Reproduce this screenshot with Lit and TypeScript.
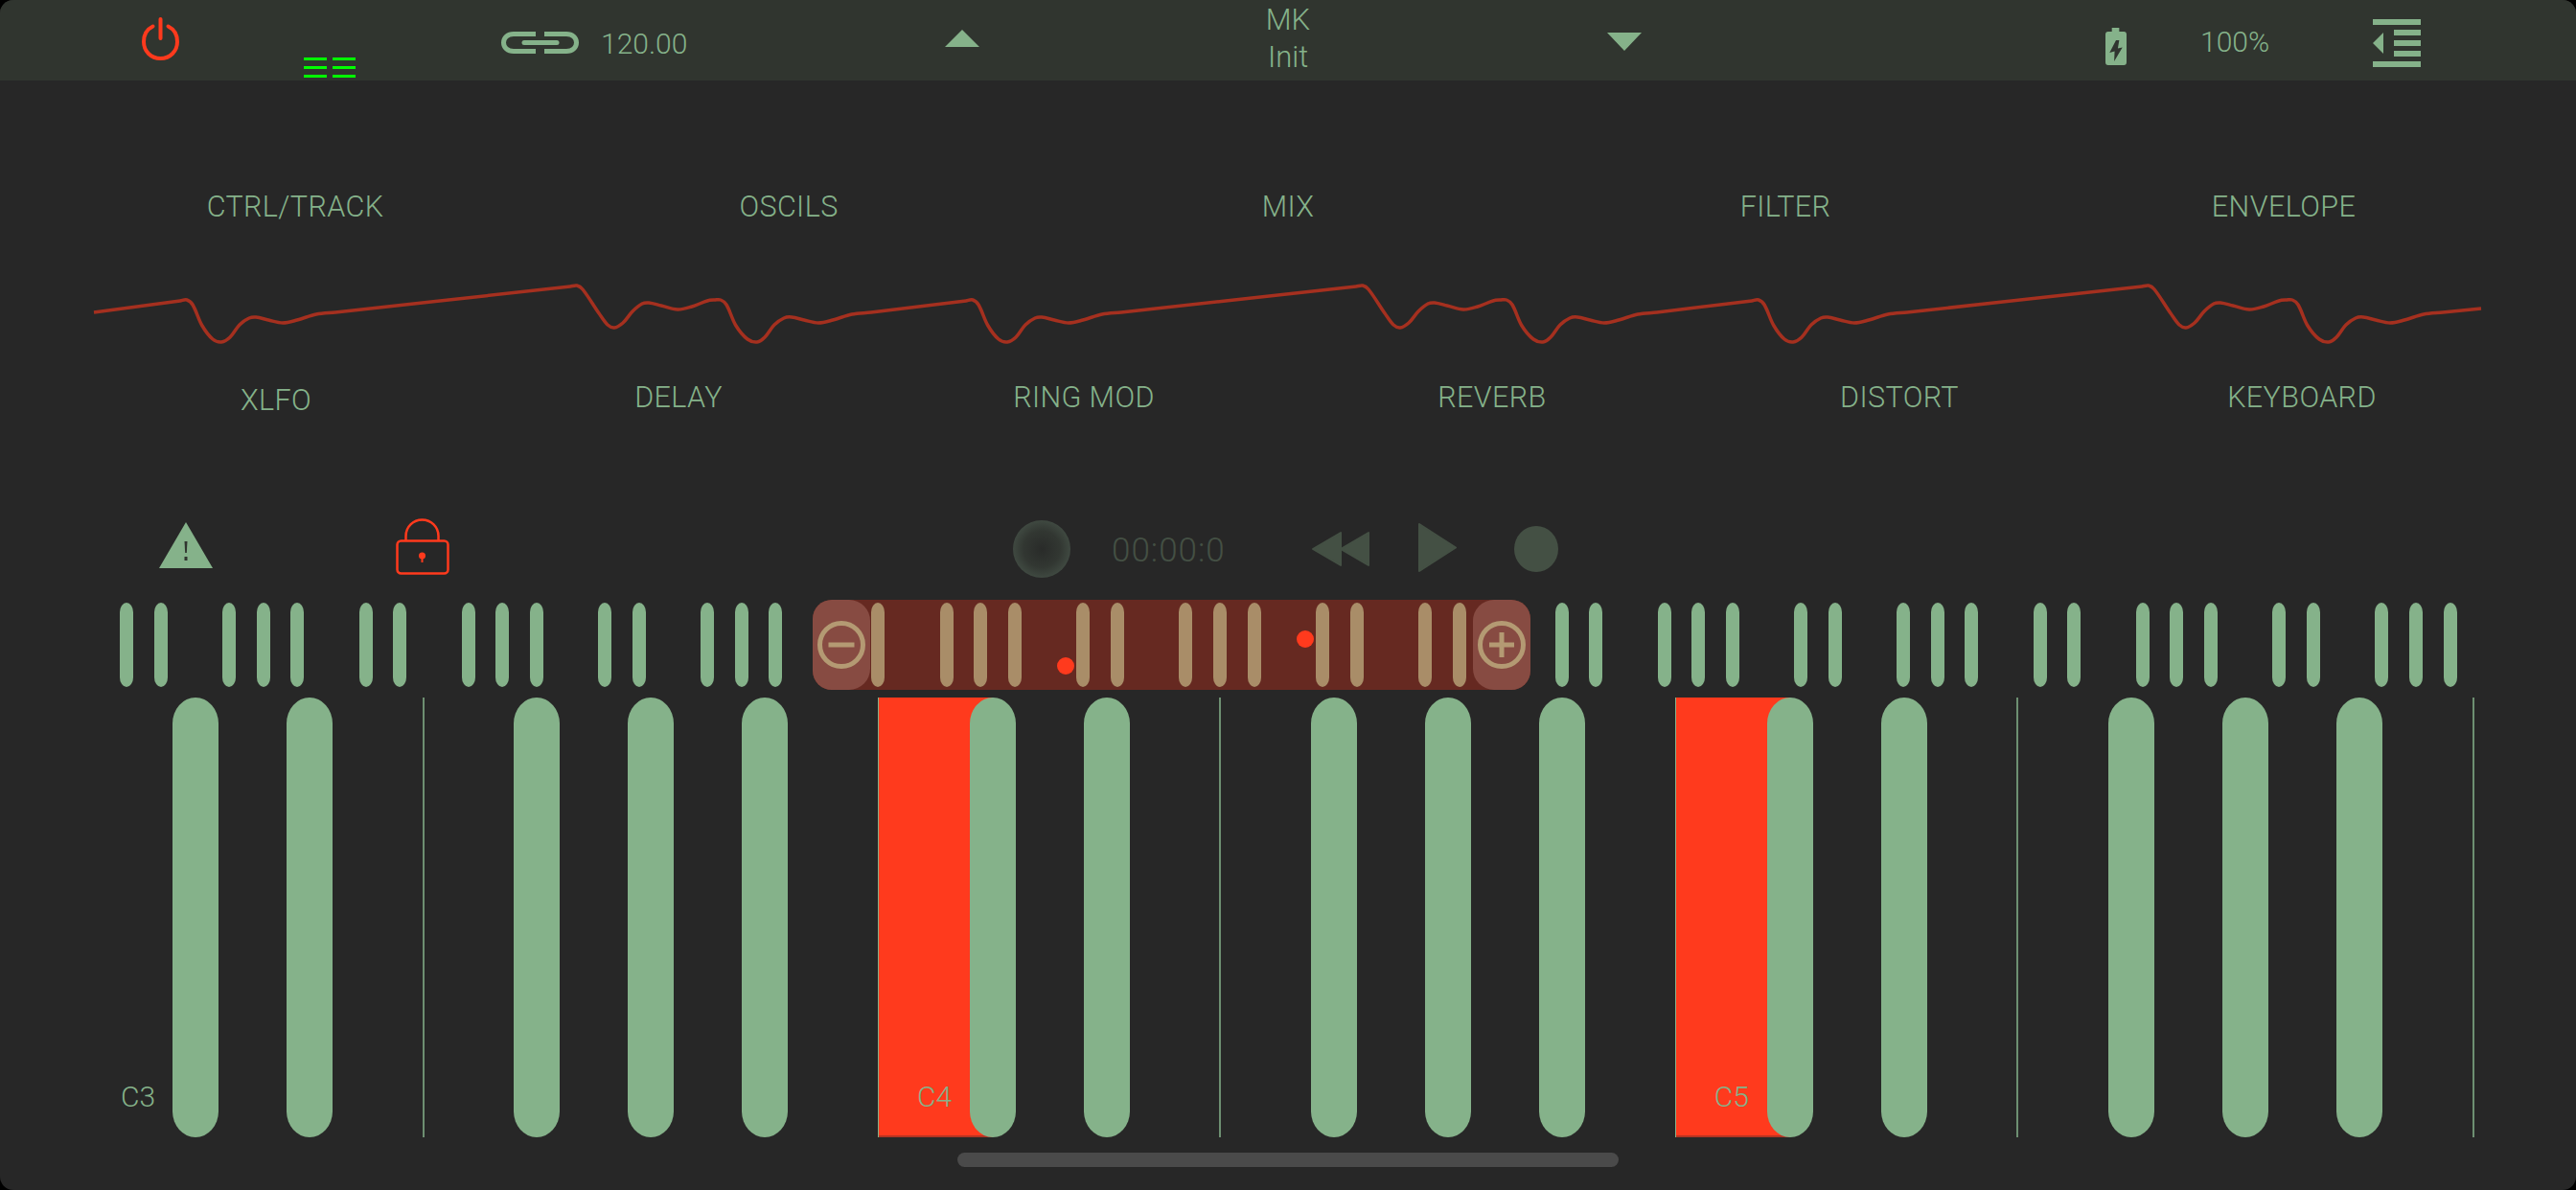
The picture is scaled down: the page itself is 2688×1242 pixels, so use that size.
import { LitElement, html, css, svg } from "lit";
import { customElement } from "lit/decorators.js";

const wavePath = (): string => {
  const cycle: [number, number][] = [
    [188, 314], [195, 313], [201, 318], [211, 340], [222, 354], [231, 357], [240, 352], [250, 339], [260, 332], [267, 331], [280, 334], [295, 337], [310, 334], [330, 328], [350, 326],
    [595, 299], [602, 298], [608, 302], [625, 327], [634, 339], [641, 342], [650, 337], [660, 325], [670, 317], [677, 316], [690, 319], [707, 323], [722, 320], [738, 314], [746, 313], [752, 313], [758, 318], [768, 340], [780, 354], [790, 357],
    [798, 352], [808, 339], [818, 332], [826, 331], [839, 334], [854, 337], [869, 334], [889, 328], [909, 326],
  ];
  const pts: [number, number][] = [[98, 326]];
  for (let k = 0; k < 3; k++) for (const [x, y] of cycle) pts.push([x + 820 * k, y]);
  pts.push([2589, 322]);
  const P = pts.filter(p => p[0] <= 2589);
  const tangent = (i: number): [number, number] => {
    const a = P[Math.max(0, i - 1)], b = P[Math.min(P.length - 1, i + 1)];
    const dx = b[0] - a[0], dy = b[1] - a[1];
    const len = Math.hypot(dx, dy) || 1;
    return [dx / len, dy / len];
  };
  let d = `M${P[0][0]} ${P[0][1]}`;
  for (let i = 0; i < P.length - 1; i++) {
    const p1 = P[i], p2 = P[i + 1];
    const seg = Math.hypot(p2[0] - p1[0], p2[1] - p1[1]) / 3;
    const t1 = tangent(i), t2 = tangent(i + 1);
    const c1x = p1[0] + t1[0] * seg, c1y = p1[1] + t1[1] * seg;
    const c2x = p2[0] - t2[0] * seg, c2y = p2[1] - t2[1] * seg;
    d += `C${c1x.toFixed(1)} ${c1y.toFixed(1)} ${c2x.toFixed(1)} ${c2y.toFixed(1)} ${p2[0]} ${p2[1]}`;
  }
  return d;
};

const BLACK_STEPS = [0, 1, 3, 4, 5];
const miniIndices: number[] = [];
for (let o = 0; o < 10; o++) for (const s of BLACK_STEPS) miniIndices.push(o * 7 + s);

const topLabels = ["CTRL/TRACK", "OSCILS", "MIX", "FILTER", "ENVELOPE"];
const bottomLabels = ["XLFO", "DELAY", "RING MOD", "REVERB", "DISTORT", "KEYBOARD"];

@customElement("app-root")
export class AppRoot extends LitElement {
  static styles = css`
    :host { display: block; width: 2688px; height: 1242px; background: #000; overflow: hidden; }
    .screen {
      width: 2688px; height: 1242px; background: #272727; border-radius: 14px; overflow: hidden;
      display: flex; flex-direction: column; color: #85b28a;
      font-family: Roboto, "Liberation Sans", sans-serif; font-weight: 300; font-size: 30px;
    }
    svg { display: block; flex: none; }

    .header { height: 84px; background: #30352f; flex: none; position: relative; display: grid;
      grid-template-columns: 148px 39px 130px 54px 152px 81px 23px 93px 266px 36px 300px 44px 311px 36px 484px 22px 77px 72px 108px 50px 1fr;
      align-items: start; }
    .power { margin-top: 18px; }
    .levels { margin-top: 60px; display: grid; grid-template-columns: 24px 24px; column-gap: 6px; row-gap: 6px; }
    .levels i { display: block; height: 3px; background: #00ff00; }
    .link { margin-top: 33px; }
    .bpm { margin-top: 28px; line-height: 36px; }
    .tri-up { margin-top: 31px; }
    .tri-down { margin-top: 34px; }
    .patch { display: flex; flex-direction: column; align-items: center; line-height: 39px; margin-top: 1px; font-size: 31px; }
    .battery { margin-top: 29px; }
    .pct { margin-top: 26px; line-height: 36px; }
    .menu { margin-top: 20px; }

    .labels-top { display: grid; grid-template-columns: 520px 510px 532px 506px 534px; padding: 114px 0 0 48px; line-height: 36px; font-size: 30.5px; letter-spacing: 0.4px; text-align: center; flex: none; }
    .wave { margin-top: 56px; filter: blur(0.6px); }
    .labels-bottom { display: grid; grid-template-columns: 420px 420px 426px 426px 424px 416px; padding: 27px 0 0 78px; line-height: 36px; font-size: 30.5px; letter-spacing: 0.4px; text-align: center; flex: none; }
    .xlfo { position: relative; top: 3px; }

    .transport { height: 64px; margin-top: 107px; flex: none; display: grid; align-items: start;
      grid-template-columns: 166px 56px 191px 56px 588px 60px 43px 118px 91px 60px 51px 40px 60px 46px; }
    .warn { margin-top: 5px; }
    .lock { margin-top: 1px; }
    .knob { width: 60px; height: 60px; margin-top: 3px; border-radius: 50%;
      background: radial-gradient(circle, #292b29 0%, #323732 45%, #4c5a4f 95%); }
    .time { color: #445044; font-size: 35px; letter-spacing: 1px; line-height: 40px; margin-top: 15px; white-space: nowrap; }
    .rew { margin-top: 15px; }
    .play { margin-top: 6px; }
    .rec { width: 46px; height: 48px; margin-top: 9px; border-radius: 50%; background: #445044; }

    .mini { position: relative; height: 94px; margin-top: 22px; flex: none; padding-left: 125px; display: grid;
      grid-template-columns: repeat(69, 35.66px); grid-template-rows: 94px; align-items: center; }
    .mkey { width: 14px; height: 88px; border-radius: 7px / 10px; background: #85b28a; grid-row: 1; position: relative; }
    .mkey.in { background: #a98d68; }
    .band { position: absolute; left: 848px; top: 0; width: 749px; height: 94px; border-radius: 20px; background: #662921; }
    .handle { position: absolute; top: 0; width: 60px; height: 94px; background: #874b42; display: grid; place-items: center; }
    .handle.l { left: 848px; border-radius: 20px 22px 22px 20px; }
    .handle.r { left: 1537px; border-radius: 22px 20px 20px 22px; }
    .dot { position: absolute; width: 18px; height: 18px; border-radius: 50%; background: #ff3a1d; }
    .dot.a { left: 1103px; top: 60px; }
    .dot.b { left: 1353px; top: 32px; }

    .keys { height: 459px; margin-top: 8px; flex: none; padding-left: 85px; display: grid;
      grid-template-columns: repeat(42, 59.43px); grid-template-rows: 459px; }
    .white { grid-row: 1; position: relative; display: flex; align-items: flex-end; }
    .white.line-r { border-right: 2px solid #6d8f71; margin-right: -1px; }
    .white.red { background: #ff3a1d; margin-left: -1px; box-shadow: inset 1px 0 0 #85b28a, inset 0 -2px 0 #b33322; }
    .note { line-height: 30px; font-size: 30px; margin: 0 0 27px 41px; }
    .black { grid-row: 1; justify-self: center; width: 48px; border-radius: 24px / 27px; background: #85b28a; z-index: 1; }

    .home { width: 690px; height: 15px; margin: 16px 0 0 999px; border-radius: 8px; background: #4a4a4a; flex: none; }
  `;

  private tri(cls: string, points: string, w: number, h: number) {
    return html`<svg class=${cls} width=${w} height=${h} viewBox="0 0 ${w} ${h}"><polygon points=${points} fill="#85b28a"/></svg>`;
  }

  private renderHeader() {
    return html`<header class="header">
      <span></span>
      <svg class="power" width="39" height="45" viewBox="0 0 39 45" fill="none" stroke="#ff3a1d" stroke-linecap="round">
        <path d="M27.500 9.500C33.500 12.500 37 18.500 37 25.500C37 35.500 29.500 43 19.500 43C9.500 43 2 35.500 2 25.500C2 18.500 5.500 12.500 11.500 9.500" stroke-width="4"/>
        <path d="M19.500 2V22" stroke-width="4"/>
      </svg>
      <span></span>
      <div class="levels">${[0, 1, 2, 3, 4, 5].map(() => html`<i></i>`)}</div>
      <span></span>
      <svg class="link" width="81" height="23" viewBox="0 0 81 23" fill="none" stroke="#85b28a" stroke-width="5">
        <path d="M36 2.500H13C6.500 2.500 2.500 6.500 2.500 11.500C2.500 16.500 6.500 20.500 13 20.500H36"/>
        <path d="M45 2.500H68C74.500 2.500 78.500 6.500 78.500 11.500C78.500 16.500 74.500 20.500 68 20.500H45"/>
        <path d="M24 11.500H58" stroke-linecap="round"/>
      </svg>
      <span></span>
      <div class="bpm">120.00</div>
      <span></span>
      ${this.tri("tri-up", "18,0 36,18 0,18", 36, 18)}
      <span></span>
      <div class="patch"><span>MK</span><span>Init</span></div>
      <span></span>
      ${this.tri("tri-down", "0,0 36,0 18,19", 36, 19)}
      <span></span>
      <svg class="battery" width="22" height="39" viewBox="0 0 23 39" preserveAspectRatio="none">
        <path d="M7 0H15V4H20Q23 4 23 7V36Q23 39 20 39H3Q0 39 0 36V7Q0 4 3 4H7Z" fill="#85b28a"/>
        <polygon points="11.500,13 15,13 13.500,21.500 18.500,20.500 9.500,35 10,24.500 4.500,26" fill="#30352f"/>
      </svg>
      <span></span>
      <div class="pct">100%</div>
      <span></span>
      <svg class="menu" width="50" height="50" viewBox="0 0 50 50" fill="#85b28a">
        <rect x="0" y="0" width="50" height="6"/>
        <rect x="22" y="11" width="28" height="6"/>
        <rect x="22" y="22" width="28" height="6"/>
        <rect x="22" y="33" width="28" height="6"/>
        <rect x="0" y="44" width="50" height="6"/>
        <polygon points="11,14 11,36 0,25"/>
      </svg>
    </header>`;
  }

  private renderTransport() {
    return html`<div class="transport">
      <span></span>
      <svg class="warn" width="56" height="48" viewBox="0 0 56 48">
        <path d="M28 0L56 48H0Z" fill="#85b28a"/>
        <path d="M26.500 20H29.500L28.800 32H27.200Z" fill="#30352f"/>
        <rect x="26.500" y="36" width="3" height="4" fill="#30352f"/>
      </svg>
      <span></span>
      <svg class="lock" width="56" height="59" viewBox="0 0 56 59" fill="none" stroke="#ff3a1d" stroke-width="2.500">
        <rect x="1.500" y="23.500" width="53" height="34" rx="4"/>
        <path d="M10.500 23V18.500A17 17 0 0 1 44.500 18.500V23"/>
        <circle cx="27.500" cy="39" r="3.500" fill="#ff3a1d" stroke="none"/>
        <path d="M27.500 40V46" stroke-width="2"/>
      </svg>
      <span></span>
      <div class="knob"></div>
      <span></span>
      <div class="time">00:00:0</div>
      <span></span>
      <svg class="rew" width="60" height="36" viewBox="0 0 60 36" fill="#445044" stroke="#445044" stroke-width="2" stroke-linejoin="round">
        <polygon points="30,1 30,35 1,18"/><polygon points="59,1 59,35 30,18"/>
      </svg>
      <span></span>
      <svg class="play" width="40" height="51" viewBox="0 0 40 51" fill="#445044" stroke="#445044" stroke-width="2" stroke-linejoin="round">
        <polygon points="1,1 39,25.500 1,50"/>
      </svg>
      <span></span>
      <div class="rec"></div>
    </div>`;
  }

  private renderMini() {
    return html`<div class="mini">
      <div class="band"></div>
      ${miniIndices.map(i => html`<div class="mkey ${i >= 22 && i <= 39 ? "in" : ""}" style="grid-column:${i + 1}"></div>`)}
      <div class="handle l">
        <svg width="50" height="50" viewBox="0 0 50 50" fill="none" stroke="#b49a73" stroke-width="5">
          <circle cx="25" cy="25" r="22.500"/><path d="M11.500 25H38.500"/>
        </svg>
      </div>
      <div class="handle r">
        <svg width="50" height="50" viewBox="0 0 50 50" fill="none" stroke="#b49a73" stroke-width="5">
          <circle cx="25" cy="25" r="22.500"/><path d="M12 25H38M25 12V38"/>
        </svg>
      </div>
      <div class="dot a"></div>
      <div class="dot b"></div>
    </div>`;
  }

  private renderKeys() {
    const whites = Array.from({ length: 21 }, (_, i) => i);
    const notes: Record<number, string> = { 0: "C3", 7: "C4", 14: "C5" };
    const lines = new Set([2, 9, 16, 20]);
    const blacks = miniIndices.filter(i => i < 21);
    return html`<div class="keys">
      ${whites.map(i => html`<div
        class="white ${lines.has(i) ? "line-r" : ""} ${i === 7 || i === 14 ? "red" : ""}"
        style="grid-column:${i * 2 + 1} / span 2">
        ${notes[i] ? html`<span class="note">${notes[i]}</span>` : ""}
      </div>`)}
      ${blacks.map(i => html`<div class="black" style="grid-column:${i * 2 + 2} / span 2"></div>`)}
    </div>`;
  }

  render() {
    return html`<div class="screen">
      ${this.renderHeader()}
      <div class="labels-top">${topLabels.map(l => html`<span>${l}</span>`)}</div>
      <svg class="wave" width="2688" height="80" viewBox="0 290 2688 80" fill="none">
        ${svg`<path d=${wavePath()} stroke="#a5301f" stroke-width="3.500" stroke-linejoin="round"/>`}
      </svg>
      <div class="labels-bottom">${bottomLabels.map((l, i) => html`<span class=${i === 0 ? "xlfo" : ""}>${l}</span>`)}</div>
      ${this.renderTransport()}
      ${this.renderMini()}
      ${this.renderKeys()}
      <div class="home"></div>
    </div>`;
  }
}
